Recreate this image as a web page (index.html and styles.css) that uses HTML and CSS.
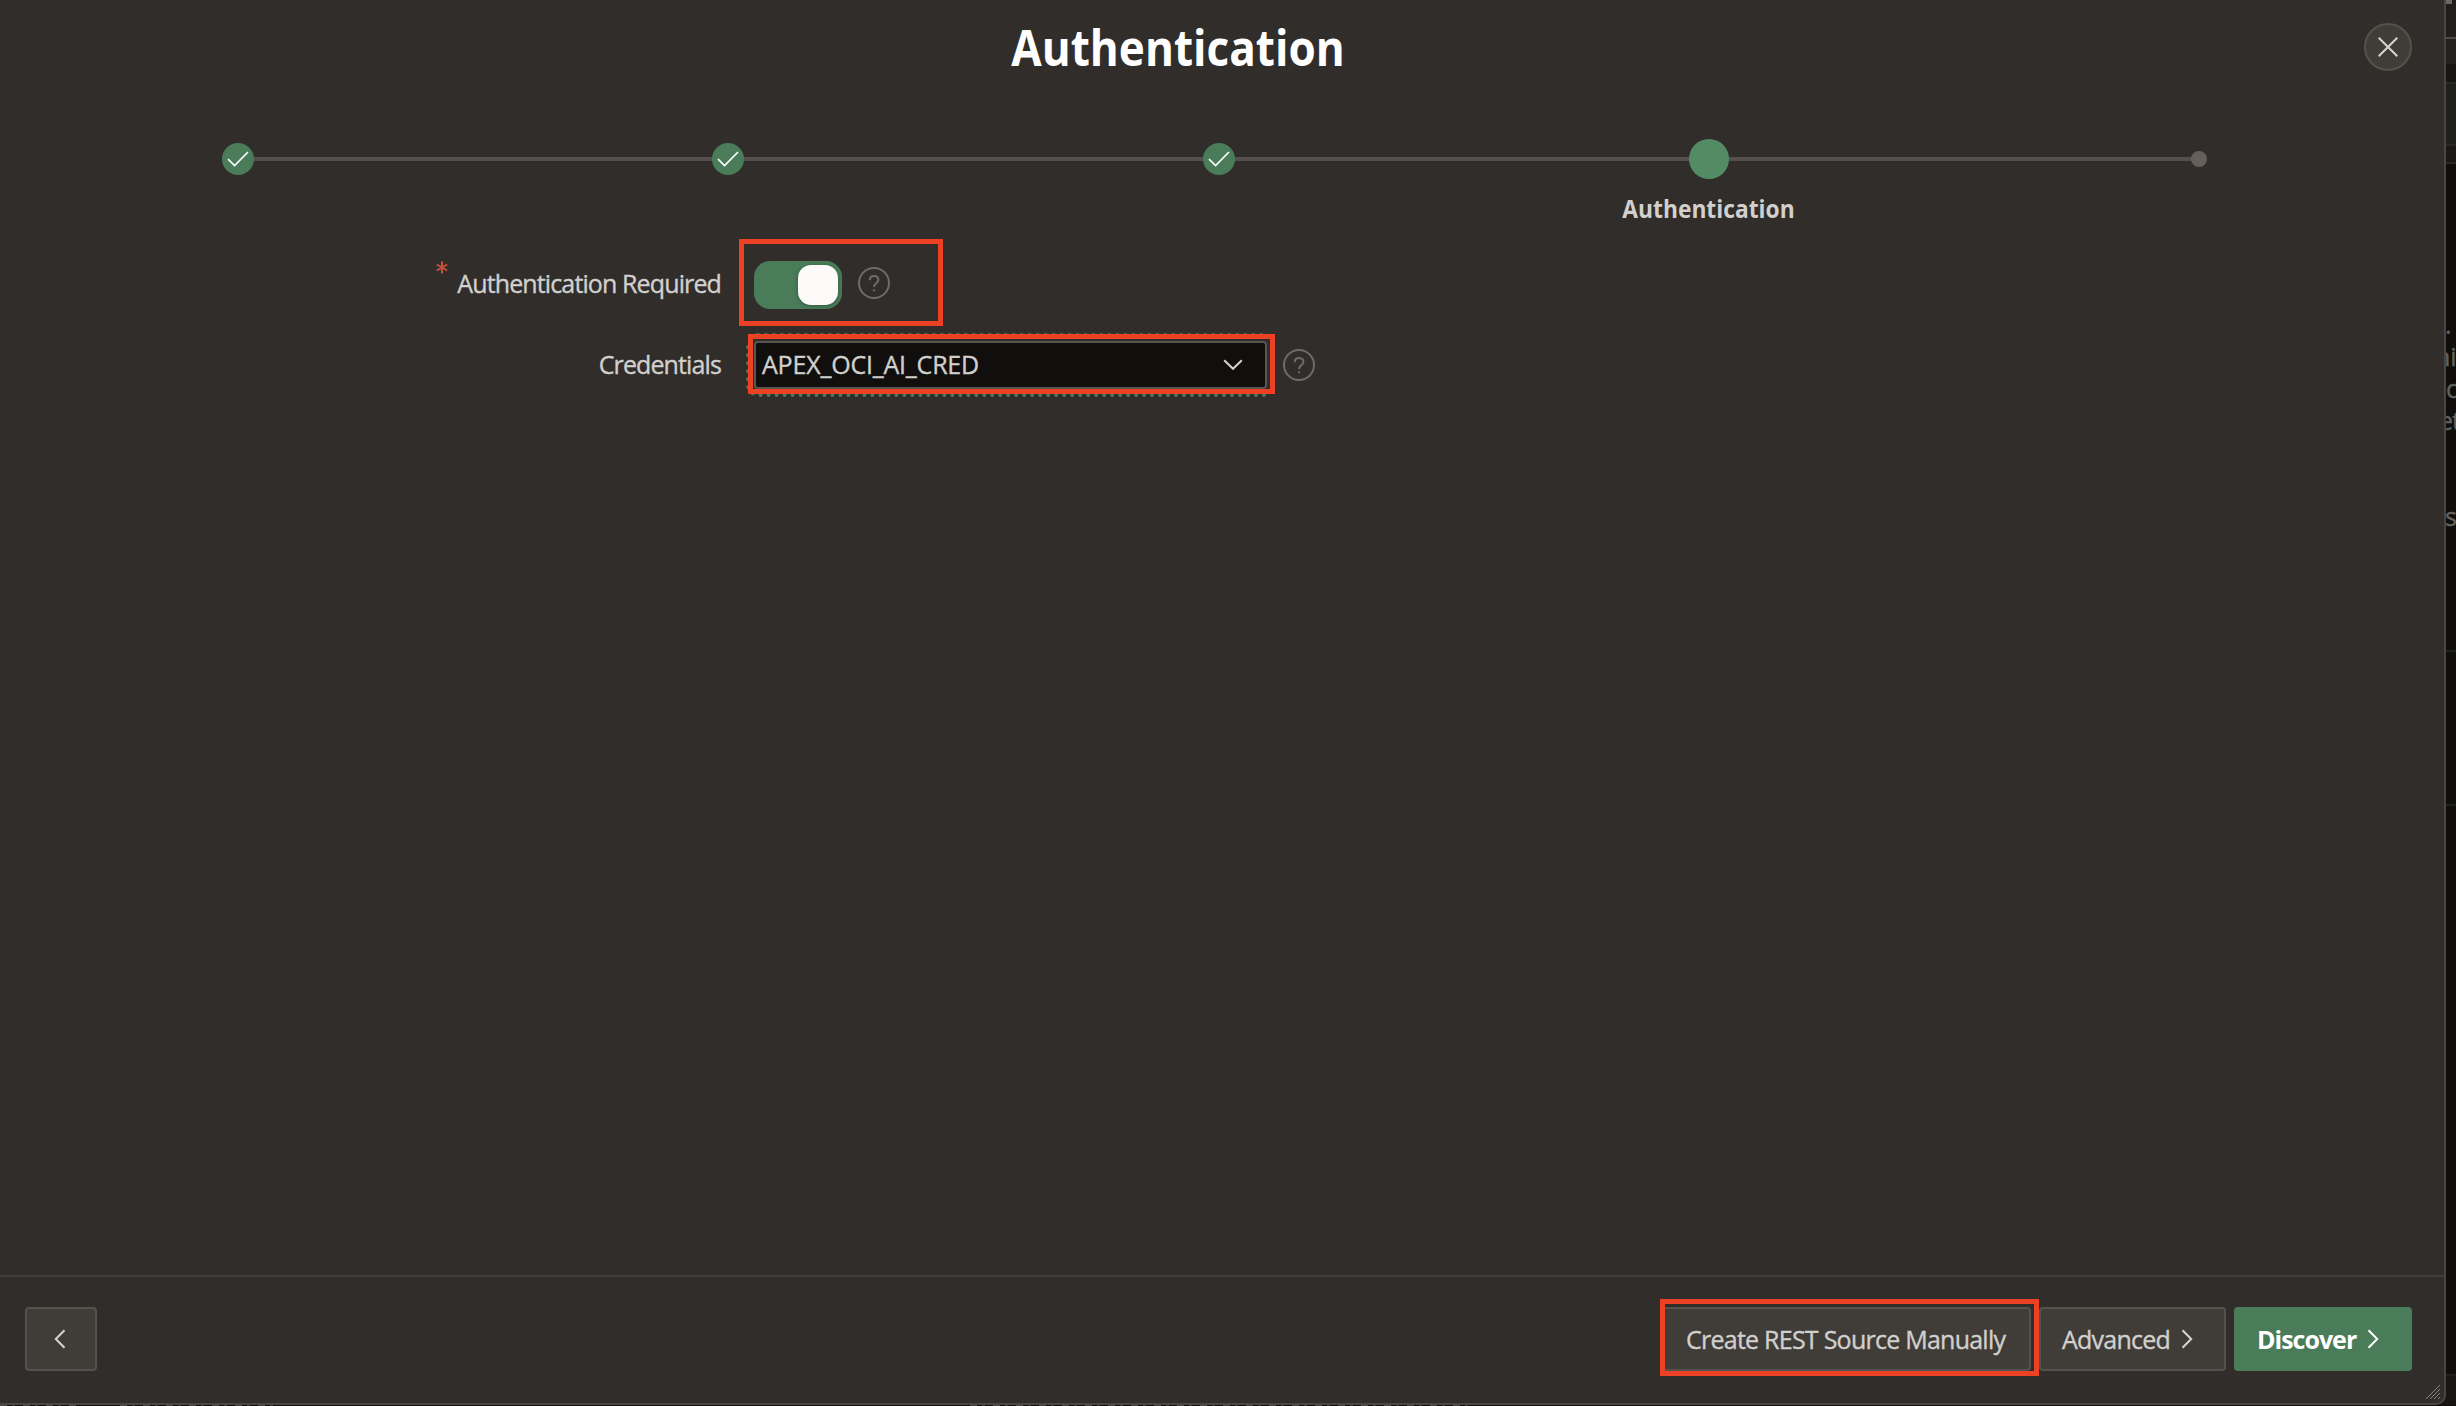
FILE: index.html
```
<!DOCTYPE html>
<html lang="en">
<head>
<meta charset="utf-8">
<title>Authentication</title>
<link rel="stylesheet" href="styles.css">
</head>
<body>
<div class="page">
  <main class="dialog">
    <header class="dialog-header">
      <h1 class="dialog-title">Authentication</h1>
      <button class="close" aria-label="Close">
        <svg width="20" height="20" viewBox="0 0 20 20"><path d="M.7.7l18.6 18.6M19.3.7L.7 19.3"/></svg>
      </button>
    </header>

    <ol class="steps">
      <li class="step"><span class="dot done"><svg width="22" height="16" viewBox="0 0 22 16"><path d="M1 8.2l6.6 6.3L21 1"/></svg></span></li>
      <li class="step"><span class="dot done"><svg width="22" height="16" viewBox="0 0 22 16"><path d="M1 8.2l6.6 6.3L21 1"/></svg></span></li>
      <li class="step"><span class="dot done"><svg width="22" height="16" viewBox="0 0 22 16"><path d="M1 8.2l6.6 6.3L21 1"/></svg></span></li>
      <li class="step"><span class="dot current"></span><span class="step-label">Authentication</span></li>
      <li class="step"><span class="dot"></span></li>
    </ol>

    <form class="form">
      <div class="row row-toggle">
        <label class="label"><svg class="required" width="12" height="13" viewBox="0 0 12 13"><path d="M6 .5v12M.8 3.5l10.4 6M11.2 3.5L.8 9.5"/></svg><span class="label-text">Authentication Required</span></label>
        <span class="toggle"><span class="knob"></span></span>
        <svg class="help" width="32" height="32" viewBox="0 0 32 32"><circle cx="16" cy="16" r="15"/><path d="M11.8 13.2c0-2.6 1.8-4.3 4.3-4.3s4.3 1.7 4.3 4c0 3-4.3 3.5-4.3 7.1M16.1 22.3v2"/></svg>
        <span class="mark mark-toggle"></span>
      </div>
      <div class="row row-select">
        <label class="label"><span class="label-text">Credentials</span></label>
        <span class="select">
          <span class="select-text">APEX_OCI_AI_CRED</span>
          <svg width="20" height="11" viewBox="0 0 20 11"><path d="M1.2 1.2l8.8 8.600 8.800-8.600"/></svg>
          <span class="mark mark-select"></span>
        </span>
        <svg class="help" width="32" height="32" viewBox="0 0 32 32"><circle cx="16" cy="16" r="15"/><path d="M11.8 13.2c0-2.6 1.8-4.3 4.3-4.3s4.3 1.7 4.3 4c0 3-4.3 3.5-4.3 7.1M16.1 22.3v2"/></svg>
      </div>
    </form>

    <footer class="footer">
      <button class="btn back" aria-label="Back"><svg width="12" height="20" viewBox="0 0 12 20"><path d="M10.500 1.300L1.800 10l8.700 8.700"/></svg></button>
      <button class="btn create"><span>Create REST Source Manually</span><span class="mark mark-create"></span></button>
      <button class="btn advanced"><span>Advanced</span><svg width="12" height="20" viewBox="0 0 12 20"><path d="M1.500 1.300l8.700 8.700-8.700 8.700"/></svg></button>
      <button class="btn discover"><span>Discover</span><svg width="12" height="20" viewBox="0 0 12 20"><path d="M1.500 1.300l8.700 8.700-8.700 8.700"/></svg></button>
      <svg class="grip" width="16" height="16" viewBox="0 0 16 16"><path d="M1 15L15 1M5 15L15 5M9 15l6-6M13 15l2-2"/></svg>
    </footer>
  </main>

  <aside class="behind">
    <div class="band band-top"></div>
    <div class="band band-tabs"></div>
    <div class="band band-gap"></div>
    <div class="band band-tools"></div>
    <div class="band band-sub"></div>
    <div class="copy">
      <p class="p-dot">.</p>
      <p class="p-ni">ni</p>
      <p class="p-c">c</p>
      <p class="p-et">et</p>
      <p class="p-s">s</p>
    </div>
    <div class="band band-mid"></div>
    <div class="band band-low"></div>
    <div class="band band-end"></div>
  </aside>
</div>
<div class="under"><span></span><span></span><span></span></div>
</body>
</html>
```
FILE: styles.css
```
* { box-sizing: border-box; }
html, body { margin: 0; height: 100%; overflow: hidden; }
body {
  background: #0f0e0c;
  color: #d2d0cd;
  font: 25px/32px "Open Sans", "Noto Sans", sans-serif;
}
button { font: inherit; color: inherit; margin: 0; padding: 0; }
svg { display: block; flex: none; fill: none; stroke: #d6d4d0; stroke-width: 2; }

.page { display: grid; grid-template-columns: 2446px 10px; height: 1405px; background: #171614; }
.dialog {
  position: relative;
  z-index: 1;
  display: flex;
  flex-direction: column;
  background: #312d2a;
  border: solid #4a4542;
  border-width: 0 2px 2px 0;
  border-radius: 0 0 10px 0;
}

.dialog-header { display: flex; align-items: flex-start; height: 139px; padding: 23px 32px 0 0; }
.dialog-title {
  flex: none;
  width: 2356px;
  margin: -10px 8px 0 0;
  text-align: center;
  font-size: 50px;
  line-height: 68px;
  font-weight: 700;
  color: #fff;
  transform: scaleX(.882);
}
.close {
  display: grid;
  place-items: center;
  width: 48px;
  height: 48px;
  background: #403c38;
  border: 2px solid #55514c;
  border-radius: 50%;
}
.close svg { margin-left: -1px; }

.steps {
  display: grid;
  grid-template-columns: repeat(5, 490.25px);
  margin: 0 0 0 -7px;
  padding: 0;
  list-style: none;
  height: 88px;
}
.step {
  display: flex;
  flex-direction: column;
  align-items: center;
  background: linear-gradient(#55504b, #55504b) 0 18px / 100% 4px no-repeat;
}
.step:first-child { background-size: 50% 4px; background-position: 100% 18px; }
.step:last-child { background-size: 50% 4px; }
.dot {
  display: grid;
  place-items: center;
  width: 16px;
  height: 16px;
  margin-top: 12px;
  border-radius: 50%;
  background: #65605c;
}
.dot.done { width: 32px; height: 32px; margin-top: 4px; background: #4a7c59; }
.dot.done svg { stroke: #fff; stroke-width: 1.7; }
.dot.current { width: 40px; height: 40px; margin-top: 0; background: #538b65; }
.step-label { margin-top: 13px; font-weight: 700; transform: scaleX(.912); }

.form { flex: 1; display: flex; flex-direction: column; }
.row { position: relative; display: flex; }
.row-toggle { height: 114px; padding-top: 34px; }
.label { display: flex; justify-content: flex-end; width: 721px; }
.label-text { padding-top: 6px; letter-spacing: -.88px; }
.label-text, .select-text, .create, .advanced { -webkit-text-stroke: .35px currentColor; }
.required { margin-right: 9px; stroke: #c4523f; }
.toggle {
  display: flex;
  justify-content: flex-end;
  width: 88px;
  height: 48px;
  margin: 0 16px 0 33px;
  padding: 4px;
  background: #4a7c59;
  border-radius: 16px;
}
.knob { width: 40px; height: 40px; border-radius: 13px; background: #fcfbf9; box-shadow: 0 1px 4px rgba(0, 0, 0, .3); }
.help { stroke: #6f6b67; }
.row-toggle .help { margin-top: 6px; }

.row-select .label-text { padding-top: 7px; }
.select {
  position: relative;
  display: flex;
  align-items: center;
  justify-content: space-between;
  width: 513px;
  height: 48px;
  margin: 0 16px 0 33px;
  padding: 0 22px 0 6px;
  background: #100f0d;
  border: 2px solid #5a5550;
  border-radius: 4px;
  outline: 4px dotted #4a7c59;
  outline-offset: 4px;
}
.select-text { margin-top: -2px; letter-spacing: -.2px; }
.select svg { margin-top: -1px; }
.row-select .help { margin-top: 8px; }

.mark { position: absolute; border: 5px solid #ec4125; pointer-events: none; }
.mark-toggle { left: 739px; top: 12px; width: 204px; height: 87px; }
.mark-select { left: -8px; top: -9px; width: 527px; height: 60px; }
.mark-create { left: -2px; top: -10px; width: 379px; height: 77px; }

.footer {
  position: relative;
  display: flex;
  gap: 8px;
  height: 128px;
  padding: 30px 32px 0 25px;
  border-top: 2px solid #403c39;
}
.btn {
  position: relative;
  display: flex;
  align-items: center;
  height: 64px;
  padding-left: 21px;
  border: 2px solid #55514c;
  border-radius: 4px;
  background: #403c38;
  letter-spacing: -.75px;
  white-space: nowrap;
}
.btn > span:first-child { margin-top: -1px; }
.back { justify-content: center; width: 72px; padding: 0; margin-right: auto; }
.back svg { margin-left: -2px; }
.create { width: 371px; padding-left: 24px; }
.advanced { width: 187px; gap: 11px; }
.discover { width: 178px; padding-left: 23px; gap: 11px; border: 0; background: #4a7c59; color: #fff; font-weight: 700; letter-spacing: -1px; }
.discover svg { stroke: #fff; }
.grip { position: absolute; right: 3px; bottom: 3px; stroke: #8a8682; stroke-width: 1; }

.behind { display: flex; flex-direction: column; overflow: hidden; color: #63625f; background: #0f0e0c; opacity: .999; }
.band { flex: none; border-bottom: 2px solid #292826; }
.band-top { height: 39px; background: linear-gradient(90deg, #6b6966, #6b6966) 0 0 / 6px 4px no-repeat #1f1e1c; border-color: #4d4b49; }
.band-tabs { height: 25px; background: #232220; border: 0; }
.band-gap { height: 20px; background: #171614; }
.band-tools { height: 62px; background: #1f1f1d; }
.band-sub { height: 18px; background: #1a1917; }
.copy { height: 486px; padding-top: 144px; }
.copy p { margin: 0; height: 32px; white-space: nowrap; -webkit-text-stroke: .4px currentColor; }
.p-dot { text-indent: -1px; }
.p-ni { text-indent: -11px; }
.p-c { text-indent: 0; }
.p-et { text-indent: -7px; letter-spacing: -1px; }
.copy .p-s { margin-top: 64px; text-indent: -1px; }
.band-mid { height: 2px; border-color: #1f1f1d; }
.band-low { height: 154px; border-color: #1f1f1d; }
.band-end { height: 570px; border-color: #201f1d; }
.behind::after { content: ""; flex: 1; background: #171614; }

.under { display: grid; grid-template-columns: 80px 200px 500px; height: 1px; overflow: hidden; }
.under span { background: repeating-linear-gradient(90deg, #4a4644 0 7px, #0f0e0c 7px 12px, #3a3735 12px 15px, #0f0e0c 15px 23px); }
.under span:nth-child(2) { margin-left: 40px; }
.under span:last-child { margin-left: 690px; margin-right: -690px; }
```
